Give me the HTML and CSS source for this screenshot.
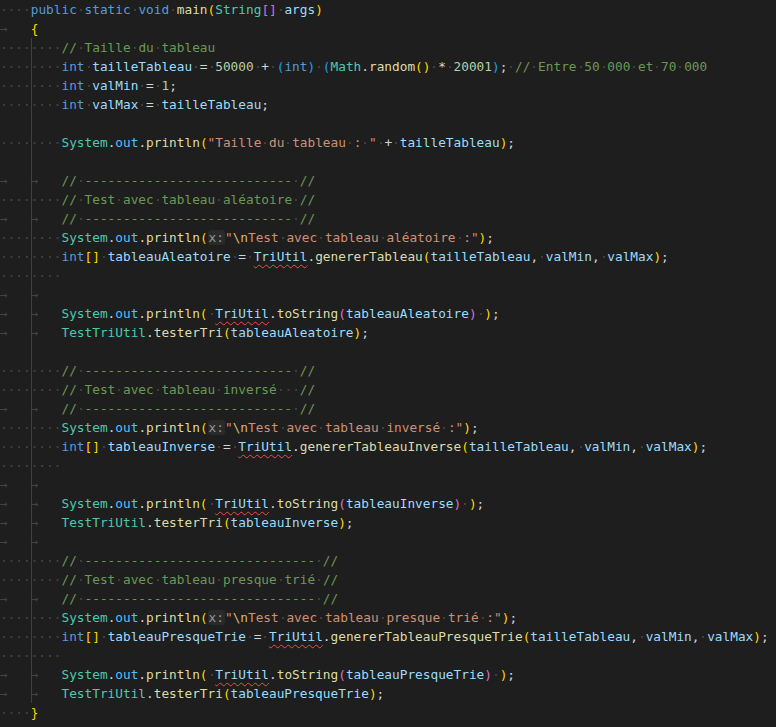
FILE: index.html
```html
<!DOCTYPE html>
<html lang="fr">
<head>
<meta charset="utf-8">
<title>Main.java</title>
<link rel="stylesheet" href="styles.css">
</head>
<body>
<div class="editor">
<div class="ln"><i>    </i><span class="k">public</span><i> </i><span class="k">static</span><i> </i><span class="k">void</span><i> </i><span class="f">main</span><span class="b1">(</span><span class="c">String</span><span class="b2">[]</span><i> </i><span class="v">args</span><span class="b1">)</span></div>
<div class="ln"><b class="t">	</b><span class="b1">{</span></div>
<div class="body">
<div class="ln"><i>        </i><span class="m">//<i> </i>Taille<i> </i>du<i> </i>tableau</span></div>
<div class="ln"><i>        </i><span class="k">int</span><i> </i><span class="v">tailleTableau</span><i> </i>=<i> </i><span class="n">50000</span><i> </i>+<i> </i><span class="b3">(</span><span class="k">int</span><span class="b3">)</span><i> </i><span class="b3">(</span><span class="c">Math</span>.<span class="f">random</span><span class="b1">()</span><i> </i>*<i> </i><span class="n">20001</span><span class="b3">)</span>;<i> </i><span class="m">//<i> </i>Entre<i> </i>50<i> </i>000<i> </i>et<i> </i>70<i> </i>000</span></div>
<div class="ln"><i>        </i><span class="k">int</span><i> </i><span class="v">valMin</span><i> </i>=<i> </i><span class="n">1</span>;</div>
<div class="ln"><i>        </i><span class="k">int</span><i> </i><span class="v">valMax</span><i> </i>=<i> </i><span class="v">tailleTableau</span>;</div>
<div class="ln"></div>
<div class="ln"><i>        </i><span class="c">System</span>.<span class="o">out</span>.<span class="f">println</span><span class="b1">(</span><span class="s">"Taille<i> </i>du<i> </i>tableau<i> </i>:<i> </i>"</span><i> </i>+<i> </i><span class="v">tailleTableau</span><span class="b1">)</span>;</div>
<div class="ln"></div>
<div class="ln"><b class="t">	</b><b class="t">	</b><span class="m">//<i> </i>---------------------------<i> </i>//</span></div>
<div class="ln"><i>        </i><span class="m">//<i> </i>Test<i> </i>avec<i> </i>tableau<i> </i>aléatoire<i> </i>//</span></div>
<div class="ln"><b class="t">	</b><b class="t">	</b><span class="m">//<i> </i>---------------------------<i> </i>//</span></div>
<div class="ln"><i>        </i><span class="c">System</span>.<span class="o">out</span>.<span class="f">println</span><span class="b1">(</span><span class="h">x:</span><span class="s">"<span class="x">\n</span>Test<i> </i>avec<i> </i>tableau<i> </i>aléatoire<i> </i>:"</span><span class="b1">)</span>;</div>
<div class="ln"><i>        </i><span class="k">int</span><span class="b1">[]</span><i> </i><span class="v">tableauAleatoire</span><i> </i>=<i> </i><span class="v e">TriUtil</span>.<span class="f">genererTableau</span><span class="b1">(</span><span class="v">tailleTableau</span>,<i> </i><span class="v">valMin</span>,<i> </i><span class="v">valMax</span><span class="b1">)</span>;</div>
<div class="ln"><i>        </i></div>
<div class="ln"><b class="t">	</b><b class="t">	</b></div>
<div class="ln"><b class="t">	</b><b class="t">	</b><span class="c">System</span>.<span class="o">out</span>.<span class="f">println</span><span class="b1">(</span><i> </i><span class="v e">TriUtil</span>.<span class="f">toString</span><span class="b2">(</span><span class="v">tableauAleatoire</span><span class="b2">)</span><i> </i><span class="b1">)</span>;</div>
<div class="ln"><b class="t">	</b><b class="t">	</b><span class="c">TestTriUtil</span>.<span class="f">testerTri</span><span class="b1">(</span><span class="v">tableauAleatoire</span><span class="b1">)</span>;</div>
<div class="ln"></div>
<div class="ln"><i>        </i><span class="m">//<i> </i>---------------------------<i> </i>//</span></div>
<div class="ln"><i>        </i><span class="m">//<i> </i>Test<i> </i>avec<i> </i>tableau<i> </i>inversé<i>   </i>//</span></div>
<div class="ln"><b class="t">	</b><b class="t">	</b><span class="m">//<i> </i>---------------------------<i> </i>//</span></div>
<div class="ln"><i>        </i><span class="c">System</span>.<span class="o">out</span>.<span class="f">println</span><span class="b1">(</span><span class="h">x:</span><span class="s">"<span class="x">\n</span>Test<i> </i>avec<i> </i>tableau<i> </i>inversé<i> </i>:"</span><span class="b1">)</span>;</div>
<div class="ln"><i>        </i><span class="k">int</span><span class="b1">[]</span><i> </i><span class="v">tableauInverse</span><i> </i>=<i> </i><span class="v e">TriUtil</span>.<span class="f">genererTableauInverse</span><span class="b1">(</span><span class="v">tailleTableau</span>,<i> </i><span class="v">valMin</span>,<i> </i><span class="v">valMax</span><span class="b1">)</span>;</div>
<div class="ln"><i>        </i></div>
<div class="ln"><b class="t">	</b><b class="t">	</b></div>
<div class="ln"><b class="t">	</b><b class="t">	</b><span class="c">System</span>.<span class="o">out</span>.<span class="f">println</span><span class="b1">(</span><i> </i><span class="v e">TriUtil</span>.<span class="f">toString</span><span class="b2">(</span><span class="v">tableauInverse</span><span class="b2">)</span><i> </i><span class="b1">)</span>;</div>
<div class="ln"><b class="t">	</b><b class="t">	</b><span class="c">TestTriUtil</span>.<span class="f">testerTri</span><span class="b1">(</span><span class="v">tableauInverse</span><span class="b1">)</span>;</div>
<div class="ln"><b class="t">	</b><b class="t">	</b></div>
<div class="ln"><i>        </i><span class="m">//<i> </i>------------------------------<i> </i>//</span></div>
<div class="ln"><i>        </i><span class="m">//<i> </i>Test<i> </i>avec<i> </i>tableau<i> </i>presque<i> </i>trié<i> </i>//</span></div>
<div class="ln"><b class="t">	</b><b class="t">	</b><span class="m">//<i> </i>------------------------------<i> </i>//</span></div>
<div class="ln"><i>        </i><span class="c">System</span>.<span class="o">out</span>.<span class="f">println</span><span class="b1">(</span><span class="h">x:</span><span class="s">"<span class="x">\n</span>Test<i> </i>avec<i> </i>tableau<i> </i>presque<i> </i>trié<i> </i>:"</span><span class="b1">)</span>;</div>
<div class="ln"><i>        </i><span class="k">int</span><span class="b1">[]</span><i> </i><span class="v">tableauPresqueTrie</span><i> </i>=<i> </i><span class="v e">TriUtil</span>.<span class="f">genererTableauPresqueTrie</span><span class="b1">(</span><span class="v">tailleTableau</span>,<i> </i><span class="v">valMin</span>,<i> </i><span class="v">valMax</span><span class="b1">)</span>;</div>
<div class="ln"><i>        </i></div>
<div class="ln"><b class="t">	</b><b class="t">	</b><span class="c">System</span>.<span class="o">out</span>.<span class="f">println</span><span class="b1">(</span><i> </i><span class="v e">TriUtil</span>.<span class="f">toString</span><span class="b2">(</span><span class="v">tableauPresqueTrie</span><span class="b2">)</span><i> </i><span class="b1">)</span>;</div>
<div class="ln"><b class="t">	</b><b class="t">	</b><span class="c">TestTriUtil</span>.<span class="f">testerTri</span><span class="b1">(</span><span class="v">tableauPresqueTrie</span><span class="b1">)</span>;</div>
</div>
<div class="ln"><i>    </i><span class="b1">}</span></div>
</div>
</body>
</html>
```
FILE: styles.css
```css
html, body {
  margin: 0;
  padding: 0;
  background: #1e1e1e;
}

.editor {
  font-family: "DejaVu Sans Mono", "Liberation Mono", monospace;
  font-size: 12.77px;
  line-height: 19px;
  color: #d4d4d4;
  tab-size: 4;
  -moz-tab-size: 4;
  width: 776px;
  height: 727px;
  overflow: hidden;
}

.ln {
  height: 19px;
  white-space: pre;
}

.body {
  background: linear-gradient(#404040, #404040) 4ch 0 / 1px 100% no-repeat;
}

/* rendered whitespace (spaces) */
.editor i {
  font-style: normal;
  background-image: linear-gradient(to right,
    transparent calc(50% - 1px), #3e3e3e calc(50% - 1px),
    #3e3e3e calc(50% + 1px), transparent calc(50% + 1px));
  background-size: 1ch 2px;
  background-repeat: repeat-x;
  background-position: 0 52%;
}

/* rendered tabs */
.t {
  font-weight: normal;
  display: inline-block;
  width: 4ch;
  color: #444444;
}
.t::before {
  content: "\2192";
}

.k { color: #569cd6; }
.v { color: #9cdcfe; }
.f { color: #dcdcaa; }
.c { color: #4ec9b0; }
.o { color: #4fc1ff; }
.s { color: #ce9178; }
.x { color: #d7ba7d; }
.m { color: #6a9955; }
.n { color: #b5cea8; }
.b1 { color: #ffd700; }
.b2 { color: #da70d6; }
.b3 { color: #179fff; }

.h {
  color: #969696;
  background: #2a2a2a;
  border-radius: 3px;
  padding: 0 1px;
}

.e {
  text-decoration: underline wavy #f14c4c;
  text-decoration-thickness: 1px;
  text-underline-offset: 3px;
  text-decoration-skip-ink: none;
}
```
